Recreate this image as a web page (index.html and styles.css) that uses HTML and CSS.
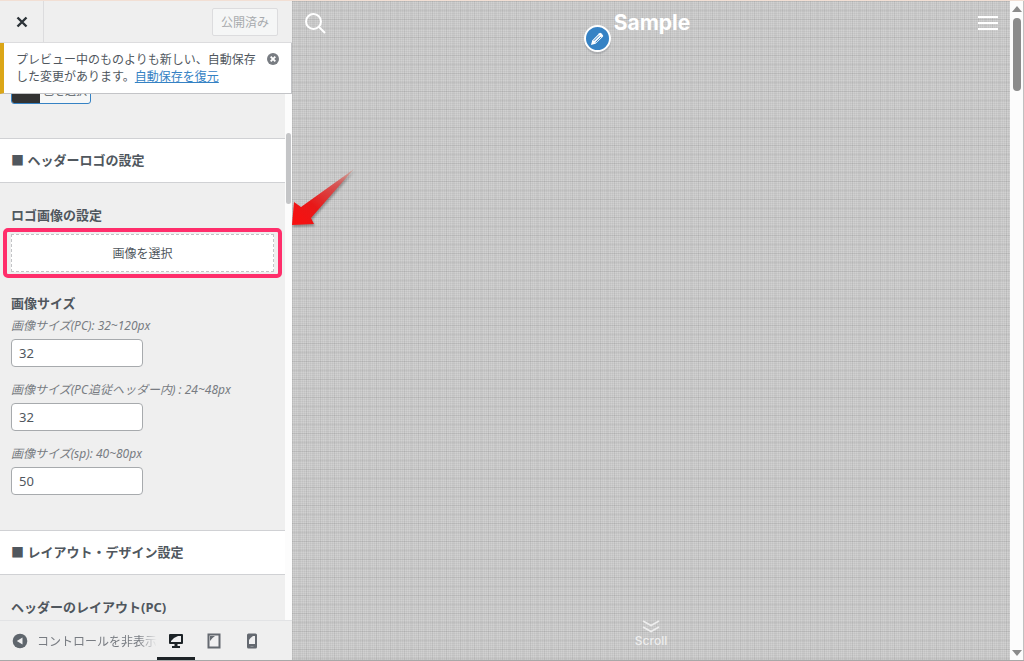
FILE: index.html
```html
<!DOCTYPE html>
<html lang="ja">
<head>
    <meta charset="UTF-8">
    <meta name="viewport" content="width=device-width, initial-scale=1.0">
    <title>Sample</title>
    <link rel="stylesheet" href="styles.css">
</head>
<body>
    <div class="customizer">
        <form class="sidebar">
            <div class="sidebar-header">
                <button type="button" class="close-btn" aria-label="閉じる">
                    <svg width="12" height="12" viewBox="0 0 12 12"><path d="M1.5 1.5l9 9M10.5 1.5l-9 9" stroke="#2c3338" stroke-width="2.4"/></svg>
                </button>
                <button type="button" class="publish-btn" disabled>公開済み</button>
                <div class="notice">
                    <p class="notice-text">プレビュー中のものよりも新しい、自動保存した変更があります。<a href="#">自動保存を復元</a></p>
                    <button type="button" class="notice-close" aria-label="通知を閉じる">
                        <svg width="12" height="12" viewBox="0 0 12 12"><circle cx="6" cy="6" r="6" fill="#787c82"/><path d="M3.7 3.7l4.6 4.6M8.3 3.7L3.7 8.3" stroke="#fff" stroke-width="1.9"/></svg>
                    </button>
                </div>
            </div>

            <div class="panel">
                <div class="controls">
                    <div class="color-row">
                        <button type="button" class="color-btn"><span class="swatch"></span><span class="color-text">色を選択</span></button>
                    </div>

                    <h2 class="section-title">■ ヘッダーロゴの設定</h2>
                    <div class="section">
                        <h3 class="control-title">ロゴ画像の設定</h3>
                        <div class="upload">
                            <button type="button" class="upload-btn">画像を選択</button>
                        </div>
                        <h3 class="control-title">画像サイズ</h3>
                        <div class="field">
                            <label for="size-pc">画像サイズ(PC): 32~120px</label>
                            <input type="text" id="size-pc" value="32">
                        </div>
                        <div class="field">
                            <label for="size-fixed">画像サイズ(PC追従ヘッダー内) : 24~48px</label>
                            <input type="text" id="size-fixed" value="32">
                        </div>
                        <div class="field">
                            <label for="size-sp">画像サイズ(sp): 40~80px</label>
                            <input type="text" id="size-sp" value="50">
                        </div>
                    </div>

                    <h2 class="section-title">■ レイアウト・デザイン設定</h2>
                    <div class="section">
                        <h3 class="control-title">ヘッダーのレイアウト(PC)</h3>
                    </div>
                </div>
                <div class="panel-track"><div class="panel-thumb"></div></div>
            </div>

            <div class="sidebar-footer">
                <button type="button" class="collapse-btn">
                    <svg width="16" height="16" viewBox="0 0 16 16"><circle cx="8" cy="8" r="7.3" fill="#5f666d"/><path d="M10.5 4.6v6.8L4.8 8z" fill="#f0f0f1"/></svg>
                    <span class="collapse-text">コントロールを非表示</span>
                </button>
                <div class="devices">
                    <button type="button" class="device active" aria-label="デスクトップ">
                        <svg width="16" height="16" viewBox="0 0 16 16"><path d="M2 1h12a1 1 0 0 1 1 1v8a1 1 0 0 1-1 1H9.5v2H12v2H4v-2h2.500v-2H2a1 1 0 0 1-1-1V2a1 1 0 0 1 1-1z" fill="#1d2327"/><path d="M3 3h10v6H3z" fill="#f0f0f1"/><path d="M3 3h7L6 5 3 8z" fill="#1d2327"/></svg>
                    </button>
                    <button type="button" class="device" aria-label="タブレット">
                        <svg width="16" height="16" viewBox="0 0 16 16"><rect x="2.500" y="1.500" width="11" height="13" fill="#f0f0f1" stroke="#646970" stroke-width="2"/><path d="M4 3h5L6.500 5 4 8z" fill="#646970"/></svg>
                    </button>
                    <button type="button" class="device" aria-label="モバイル">
                        <svg width="16" height="16" viewBox="0 0 16 16"><rect x="3" y="0.500" width="10" height="15" rx="1.500" fill="#646970"/><path d="M5 3h6v8H5z" fill="#f0f0f1"/><path d="M5 3h4L6.500 5 5 7z" fill="#646970"/><path d="M6.500 13h3v1h-3z" fill="#8c9096"/></svg>
                    </button>
                </div>
            </div>
        </form>

        <div class="preview">
            <div class="site">
                <header class="site-header">
                    <button type="button" class="icon-btn" aria-label="検索">
                        <svg width="22" height="22" viewBox="0 0 22 22" fill="none" stroke="#fff" stroke-width="2"><circle cx="9.500" cy="9.500" r="7.500"/><path d="M15 15l6 6"/></svg>
                    </button>
                    <h1 class="site-title">
                        <a href="#">Sample</a>
                        <button type="button" class="edit-btn" aria-label="編集">
                            <svg width="16" height="16" viewBox="0 0 16 16"><path d="M2 14l1.200-4.500L10.300 2.200a1.300 1.300 0 0 1 1.800 0l1.700 1.700a1.300 1.300 0 0 1 0 1.800L6.500 12.800z" fill="#fff"/><path d="M4.800 9.800l5.500-5.500M6.500 11.400l5.500-5.500" stroke="#3582c4" stroke-width="1"/></svg>
                        </button>
                    </h1>
                    <button type="button" class="icon-btn" aria-label="メニュー">
                        <svg width="20" height="16" viewBox="0 0 20 16"><path d="M0 2h20M0 8h20M0 14h20" stroke="#fff" stroke-width="1.800"/></svg>
                    </button>
                </header>
                <a href="#" class="scroll-link">
                    <svg width="18" height="13" viewBox="0 0 18 13" fill="none" stroke="#eee" stroke-width="1.600"><path d="M1 1l8 4.500L17 1M1 7l8 4.500L17 7"/></svg>
                    Scroll
                </a>
            </div>
            <div class="scrollbar">
                <svg width="10" height="6" viewBox="0 0 10 6"><path d="M5 0l5 6H0z" fill="#8b8b8b"/></svg>
                <div class="scrollbar-thumb"></div>
                <svg width="10" height="6" viewBox="0 0 10 6"><path d="M5 6l5-6H0z" fill="#8b8b8b"/></svg>
            </div>
        </div>

        <svg class="arrow" width="68" height="64" viewBox="0 0 68 64">
            <defs>
                <linearGradient id="arrow-fill" x1="0" y1="1" x2="1" y2="0">
                    <stop offset="0" stop-color="#fa0f0f"/>
                    <stop offset="0.350" stop-color="#e81818"/>
                    <stop offset="0.750" stop-color="#d85050" stop-opacity="0.900"/>
                    <stop offset="1" stop-color="#d09080" stop-opacity="0.500"/>
                </linearGradient>
            </defs>
            <path d="M2 59L4 36l7 5L64 3 21 52l3 6z" fill="url(#arrow-fill)"/>
        </svg>
    </div>
</body>
</html>
```
FILE: styles.css
```css
:root {
    --grey: #efefef;
    --text: #50575e;
    --line: #d0d1d4;
    --pink: #ff2e6b;
    --blue: #3582c4;
}

* {
    box-sizing: border-box;
}

body {
    margin: 0;
    font-family: "Noto Sans", "Noto Sans CJK JP", sans-serif;
    font-size: 12px;
    color: var(--text);
}

button {
    padding: 0;
    border: none;
    background: none;
    font: inherit;
    color: inherit;
}

svg {
    display: block;
}

h1, h2, h3, p {
    margin: 0;
}

.customizer {
    position: relative;
    display: flex;
    height: 100vh;
    border-top: 1px solid #f2dfd4;
    border-bottom: 1px solid #a8a8a8;
}

/* sidebar */
.sidebar {
    flex: 0 0 292px;
    min-width: 0;
    display: flex;
    flex-direction: column;
    background-color: var(--grey);
}

.sidebar-header {
    position: relative;
    display: flex;
    align-items: center;
    justify-content: space-between;
    height: 43px;
    padding-right: 14px;
    border-bottom: 2px solid #dcdcde;
}

.close-btn {
    display: flex;
    align-items: center;
    justify-content: center;
    align-self: stretch;
    width: 44px;
    border-right: 1px solid #dcdcde;
}

.publish-btn {
    height: 28px;
    padding: 0 8px;
    border: 1px solid #dcdcde;
    border-radius: 2px;
    background-color: #f5f6f6;
    color: #a7aaad;
}

.notice {
    position: absolute;
    top: 100%;
    left: 0;
    right: 0;
    z-index: 1;
    display: flex;
    justify-content: space-between;
    align-items: flex-start;
    margin-top: 1px;
    padding: 8px 12px;
    border-left: 4px solid #dba617;
    border-right: 1px solid #c3c4c7;
    border-bottom: 1px solid #c3c4c7;
    background-color: #fff;
}

.notice-text {
    flex: 0 0 240px;
    line-height: 17px;
}

.notice-text a {
    color: var(--blue);
}

.notice-close {
    padding-top: 2px;
}

.panel {
    flex: 1;
    display: flex;
    min-height: 0;
    overflow: hidden;
}

.controls {
    flex: 1;
    min-width: 0;
}

.panel-track {
    flex: 0 0 7px;
    padding: 89px 1px 0;
    background-color: #fcfcfc;
}

.panel-thumb {
    height: 71px;
    border-radius: 3px;
    background-color: #c4c5c7;
}

.color-row {
    padding: 32px 11px 34px;
}

.color-btn {
    display: flex;
    align-items: stretch;
    height: 28px;
    border: 1px solid var(--blue);
    border-radius: 3px;
    background-color: #f6f7f7;
    overflow: hidden;
}

.swatch {
    width: 28px;
    background-color: #333;
}

.color-text {
    padding: 0 3px;
    font-size: 11px;
    line-height: 28px;
}

.section-title {
    padding: 0 11px;
    border-top: 1px solid var(--line);
    border-bottom: 1px solid var(--line);
    background-color: #fff;
    font-size: 13px;
    line-height: 43px;
}

.section {
    padding: 20px 11px 35px;
}

.control-title {
    font-size: 13px;
    line-height: 24px;
}

.upload {
    position: relative;
    margin: 7px 0 19px;
}

.upload::after {
    content: "";
    position: absolute;
    inset: -6px -8px;
    border: 4px solid var(--pink);
    border-radius: 5px;
    pointer-events: none;
}

.upload-btn {
    display: block;
    width: 100%;
    height: 38px;
    border: 1px dashed #c3c4c7;
    background-color: #fff;
}

.field {
    display: flex;
    flex-direction: column;
    align-items: flex-start;
    gap: 3px;
    margin-bottom: 12px;
}

.field:last-child {
    margin-bottom: 0;
}

.field label {
    font-style: italic;
    line-height: 21px;
    color: #787c82;
}

.field input {
    width: 50%;
    height: 28px;
    padding: 0 7px;
    border: 1px solid #a7aaad;
    border-radius: 4px;
    background-color: #fff;
    font: inherit;
    font-size: 13px;
    color: var(--text);
}

.sidebar-footer {
    display: flex;
    height: 40px;
    border-top: 1px solid #e2e3e5;
}

.collapse-btn {
    flex: 1;
    display: flex;
    align-items: center;
    gap: 9px;
    min-width: 0;
    padding-left: 12px;
}

.collapse-btn svg {
    flex: none;
}

.collapse-text {
    min-width: 0;
    overflow: hidden;
    white-space: nowrap;
    color: #787c82;
    -webkit-mask-image: linear-gradient(to right, #000 85%, transparent);
    mask-image: linear-gradient(to right, #000 85%, transparent);
}

.devices {
    display: flex;
    padding-right: 21px;
}

.device {
    display: flex;
    align-items: center;
    justify-content: center;
    width: 38px;
    padding-top: 3px;
    border-bottom: 3px solid transparent;
}

.device.active {
    border-bottom-color: #1d2327;
}

/* preview */
.preview {
    flex: 1;
    display: flex;
    border-right: 1px solid #c0c0c0;
}

.site {
    flex: 1;
    display: flex;
    flex-direction: column;
    justify-content: space-between;
    background-color: #d1d1d1;
    background-image:
        repeating-linear-gradient(to right, rgba(0, 0, 0, 0.04) 0 1px, transparent 1px 2px),
        repeating-linear-gradient(to bottom, rgba(0, 0, 0, 0.04) 0 1px, transparent 1px 2px),
        repeating-linear-gradient(to right, rgba(0, 0, 0, 0.04) 0 1px, transparent 1px 7px),
        repeating-linear-gradient(to bottom, rgba(0, 0, 0, 0.06) 0 1px, transparent 1px 9px);
}

.site-header {
    display: flex;
    align-items: center;
    justify-content: space-between;
    height: 44px;
    padding: 0 12px;
}

.site-title {
    position: relative;
    font-family: Inter, sans-serif;
    font-size: 21px;
    line-height: 26px;
}

.site-title a {
    color: #fff;
    text-decoration: none;
}

.edit-btn {
    position: absolute;
    top: 15px;
    left: -30px;
    display: flex;
    align-items: center;
    justify-content: center;
    width: 27px;
    height: 27px;
    border: 2px solid #fff;
    border-radius: 50%;
    background-color: var(--blue);
    box-shadow: 0 2px 1px rgba(60, 67, 74, 0.2);
}

.scroll-link {
    display: flex;
    flex-direction: column;
    align-items: center;
    gap: 1px;
    padding-bottom: 12px;
    font-family: Inter, sans-serif;
    font-size: 12px;
    font-weight: 500;
    line-height: 14px;
    color: #eee;
    text-decoration: none;
}

.scrollbar {
    flex: 0 0 13px;
    display: flex;
    flex-direction: column;
    align-items: center;
    gap: 6px;
    padding: 5px 0 4px;
    background-color: #fcfcfc;
}

.scrollbar-thumb {
    width: 8px;
    height: 73px;
    margin-bottom: auto;
    border-radius: 4px;
    background-color: #8b8b8b;
}

.arrow {
    position: absolute;
    top: 165px;
    left: 290px;
    filter: drop-shadow(1px 2px 1px rgba(0, 0, 0, 0.3));
}
```
